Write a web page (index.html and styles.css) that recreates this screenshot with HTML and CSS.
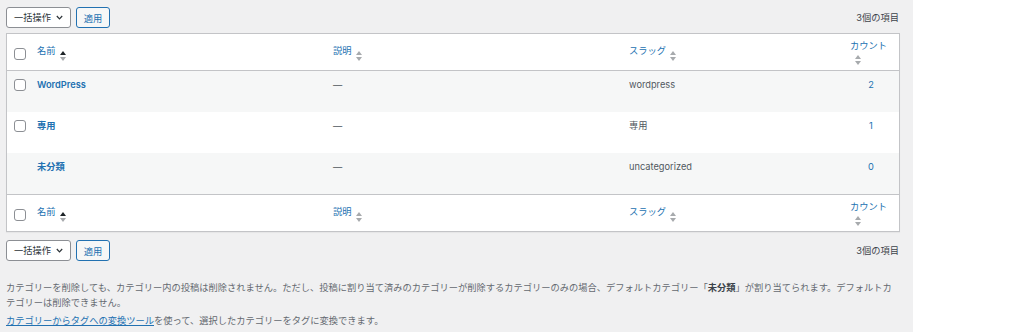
FILE: index.html
```html
<!DOCTYPE html>
<html lang="ja">
<head>
    <meta charset="UTF-8">
    <meta name="viewport" content="width=device-width, initial-scale=1.0">
    <title>カテゴリー</title>
    <link rel="stylesheet" href="styles.css">
</head>
<body>
    <div class="wrap">
        <div class="tablenav">
            <div class="bulk-actions">
                <div class="bulk-select">
                    <span>一括操作</span>
                    <svg class="chevron" width="7" height="5" viewBox="0 0 7 5"><path d="M0.8 1 L3.5 3.8 L6.2 1" fill="none" stroke="#2c3338" stroke-width="1.2"/></svg>
                </div>
                <button class="apply" type="button">適用</button>
            </div>
            <div class="displaying-num">3個の項目</div>
        </div>

        <table class="list-table">
            <colgroup>
                <col class="col-check">
                <col class="col-name">
                <col class="col-desc">
                <col class="col-slug">
                <col class="col-count">
            </colgroup>
            <thead>
                <tr>
                    <td class="check-column"><input type="checkbox"></td>
                    <th><a href="#">名前<span class="sorting sorted"><i class="up"></i><i class="down"></i></span></a></th>
                    <th><a href="#">説明<span class="sorting"><i class="up"></i><i class="down"></i></span></a></th>
                    <th><a href="#">スラッグ<span class="sorting"><i class="up"></i><i class="down"></i></span></a></th>
                    <th class="num"><a href="#" class="count-link">カウント<span class="sorting"><i class="up"></i><i class="down"></i></span></a></th>
                </tr>
            </thead>
            <tbody>
                <tr class="alt">
                    <th class="check-column"><input type="checkbox"></th>
                    <td><a href="#" class="row-title">WordPress</a></td>
                    <td>—</td>
                    <td>wordpress</td>
                    <td class="num"><a href="#">2</a></td>
                </tr>
                <tr>
                    <th class="check-column"><input type="checkbox"></th>
                    <td><a href="#" class="row-title">専用</a></td>
                    <td>—</td>
                    <td>専用</td>
                    <td class="num"><a href="#">1</a></td>
                </tr>
                <tr class="alt">
                    <th class="check-column"></th>
                    <td><a href="#" class="row-title">未分類</a></td>
                    <td>—</td>
                    <td>uncategorized</td>
                    <td class="num"><a href="#">0</a></td>
                </tr>
            </tbody>
            <tfoot>
                <tr>
                    <td class="check-column"><input type="checkbox"></td>
                    <th><a href="#">名前<span class="sorting sorted"><i class="up"></i><i class="down"></i></span></a></th>
                    <th><a href="#">説明<span class="sorting"><i class="up"></i><i class="down"></i></span></a></th>
                    <th><a href="#">スラッグ<span class="sorting"><i class="up"></i><i class="down"></i></span></a></th>
                    <th class="num"><a href="#" class="count-link">カウント<span class="sorting"><i class="up"></i><i class="down"></i></span></a></th>
                </tr>
            </tfoot>
        </table>

        <div class="tablenav bottom">
            <div class="bulk-actions">
                <div class="bulk-select">
                    <span>一括操作</span>
                    <svg class="chevron" width="7" height="5" viewBox="0 0 7 5"><path d="M0.8 1 L3.5 3.8 L6.2 1" fill="none" stroke="#2c3338" stroke-width="1.2"/></svg>
                </div>
                <button class="apply" type="button">適用</button>
            </div>
            <div class="displaying-num">3個の項目</div>
        </div>

        <div class="term-notes">
            <p>カテゴリーを削除しても、カテゴリー内の投稿は削除されません。ただし、投稿に割り当て済みのカテゴリーが削除するカテゴリーのみの場合、デフォルトカテゴリー「<strong>未分類</strong>」が割り当てられます。デフォルトカ<br>テゴリーは削除できません。</p>
            <p><a href="#">カテゴリーからタグへの変換ツール</a>を使って、選択したカテゴリーをタグに変換できます。</p>
        </div>
    </div>
</body>
</html>
```

FILE: styles.css
```css
/* Reset */
* {
    margin: 0;
    padding: 0;
    box-sizing: border-box;
}

body {
    font-family: Inter, 'Noto Sans CJK JP', sans-serif;
    font-size: 9.25px;
    line-height: 14px;
    color: #3c434a;
    background-color: #ffffff;
}

a {
    color: #2271b1;
    text-decoration: none;
}

.wrap {
    width: 913px;
    min-height: 332px;
    padding: 7px 14px 0 6px;
    background-color: #f0f0f1;
}

/* Table navigation */
.tablenav {
    display: flex;
    justify-content: space-between;
    align-items: center;
    height: 21px;
    margin-bottom: 5px;
}

.tablenav.bottom {
    margin-top: 8px;
    margin-bottom: 0;
}

.bulk-actions {
    display: flex;
    gap: 5px;
    height: 100%;
}

.bulk-select {
    display: flex;
    align-items: center;
    justify-content: space-between;
    width: 65px;
    padding: 0 7px;
    background: #ffffff;
    border: 1px solid #8c8f94;
    border-radius: 3px;
    color: #2c3338;
}

.chevron {
    display: block;
}

.apply {
    width: 34px;
    font-family: inherit;
    font-size: 9.25px;
    color: #2271b1;
    background: #f6f7f7;
    border: 1px solid #2271b1;
    border-radius: 3px;
}

.displaying-num {
    color: #3c434a;
}

/* List table */
.list-table {
    width: 894px;
    table-layout: fixed;
    border-spacing: 0;
    background: #ffffff;
    border: 1px solid #c3c4c7;
    box-shadow: 0 1px 1px rgba(0, 0, 0, 0.04);
}

.col-check { width: 23px; }
.col-name { width: 296px; }
.col-desc { width: 296px; }
.col-slug { width: 221px; }
.col-count { width: 56px; }

.list-table thead th,
.list-table thead td,
.list-table tfoot th,
.list-table tfoot td {
    padding: 5px 7px;
    line-height: 13px;
    font-weight: normal;
    text-align: left;
    vertical-align: middle;
}

.list-table thead th,
.list-table thead td {
    border-bottom: 1px solid #c3c4c7;
}

.list-table tfoot th,
.list-table tfoot td {
    border-top: 1px solid #c3c4c7;
}

.list-table tbody th,
.list-table tbody td {
    padding: 7px 7px 20px;
    line-height: 14px;
    vertical-align: top;
    text-align: left;
    color: #50575e;
}

.list-table tbody tr.alt {
    background-color: #f6f7f7;
}

.list-table .num,
.list-table tbody td.num {
    text-align: center;
}

.row-title {
    font-weight: 600;
}

/* Checkboxes */
.check-column input[type="checkbox"] {
    appearance: none;
    display: block;
    width: 12px;
    height: 12px;
    background: #ffffff;
    border: 1px solid #8c8f94;
    border-radius: 3px;
}

thead .check-column input,
tfoot .check-column input {
    margin-top: 4px;
}

tbody .check-column input {
    margin-top: 1px;
}

/* Sorting indicators */
.sorting {
    display: inline-flex;
    flex-direction: column;
    gap: 2px;
    margin-left: 4px;
    vertical-align: -1px;
}

.sorting i {
    display: block;
    width: 0;
    height: 0;
    border-left: 3px solid transparent;
    border-right: 3px solid transparent;
}

.sorting .up {
    border-bottom: 4px solid #a7aaad;
}

.sorting .down {
    border-top: 4px solid #a7aaad;
}

.sorting.sorted .up {
    border-bottom-color: #1d2327;
}

.count-link {
    display: inline-block;
    width: 42px;
    text-align: left;
}

.count-link .sorting {
    display: flex;
    margin: 3px 0 0 5px;
}

/* Notes */
.term-notes {
    margin-top: 19px;
    line-height: 15px;
    color: #646970;
}

.term-notes p + p {
    margin-top: 3px;
}

.term-notes strong {
    font-weight: 600;
    color: #3c434a;
}

.term-notes a {
    text-decoration: underline;
}
```
